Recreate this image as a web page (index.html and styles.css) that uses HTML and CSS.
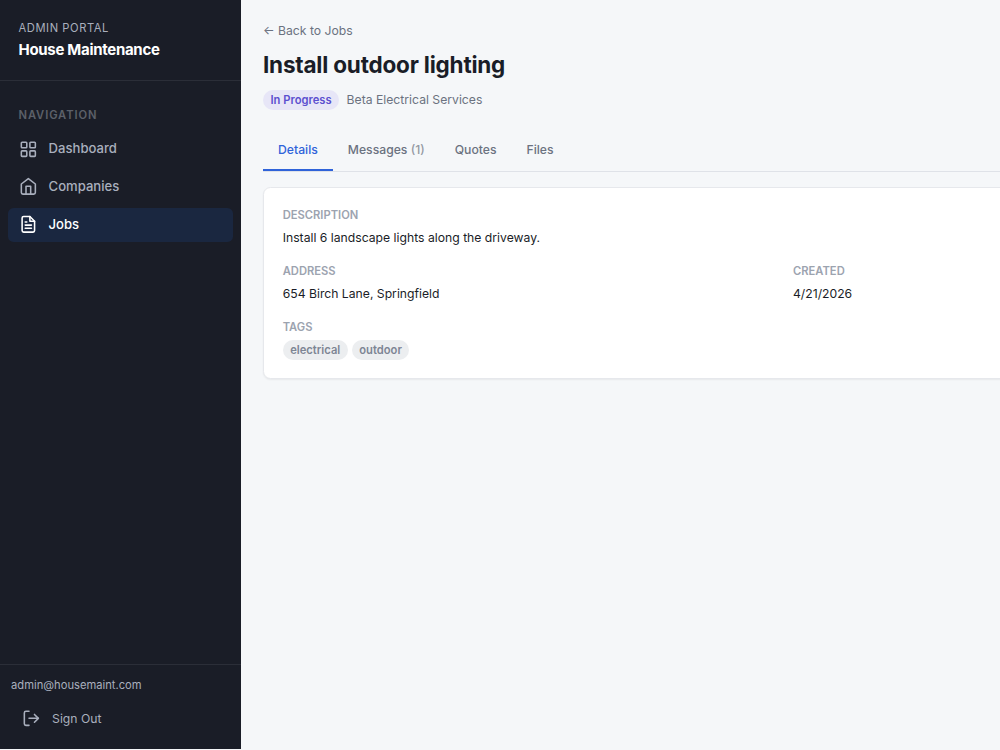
FILE: index.html
```html
<!DOCTYPE html>
<html lang="en">
<head>
    <meta charset="UTF-8">
    <meta name="viewport" content="width=device-width, initial-scale=1.0">
    <title>House Maintenance</title>
    <link rel="stylesheet" href="styles.css">
</head>
<body>
    <div class="layout">
        <aside class="sidebar">
            <div class="brand">
                <div class="brand-label">Admin Portal</div>
                <div class="brand-name">House Maintenance</div>
            </div>
            <nav class="nav">
                <div class="nav-title">Navigation</div>
                <a class="nav-item">
                    <svg class="icon" viewBox="0 0 24 24"><rect x="3" y="3" width="7" height="7" rx="1"/><rect x="14" y="3" width="7" height="7" rx="1"/><rect x="3" y="14" width="7" height="7" rx="1"/><rect x="14" y="14" width="7" height="7" rx="1"/></svg>
                    Dashboard
                </a>
                <a class="nav-item">
                    <svg class="icon" viewBox="0 0 24 24"><path d="M3 9l9-7 9 7v11a2 2 0 0 1-2 2H5a2 2 0 0 1-2-2z"/><path d="M9 22V12h6v10"/></svg>
                    Companies
                </a>
                <a class="nav-item active">
                    <svg class="icon" viewBox="0 0 24 24"><path d="M14 2H6a2 2 0 0 0-2 2v16a2 2 0 0 0 2 2h12a2 2 0 0 0 2-2V8z"/><path d="M14 2v6h6"/><path d="M16 13H8"/><path d="M16 17H8"/><path d="M10 9H8"/></svg>
                    Jobs
                </a>
            </nav>
            <div class="sidebar-footer">
                <div class="user-email">admin@housemaint.com</div>
                <button class="sign-out">
                    <svg class="icon" viewBox="0 0 24 24"><path d="M9 21H5a2 2 0 0 1-2-2V5a2 2 0 0 1 2-2h4"/><path d="M16 17l5-5-5-5"/><path d="M21 12H9"/></svg>
                    Sign Out
                </button>
            </div>
        </aside>

        <main class="main">
            <a class="back-link">← Back to Jobs</a>
            <h1>Install outdoor lighting</h1>
            <div class="job-meta">
                <span class="badge badge-progress">In Progress</span>
                <span class="company">Beta Electrical Services</span>
            </div>

            <div class="tabs">
                <button class="tab active">Details</button>
                <button class="tab">Messages <span class="count">(1)</span></button>
                <button class="tab">Quotes</button>
                <button class="tab">Files</button>
            </div>

            <div class="card">
                <div class="field full">
                    <div class="field-label">Description</div>
                    <div class="field-value">Install 6 landscape lights along the driveway.</div>
                </div>
                <div class="field">
                    <div class="field-label">Address</div>
                    <div class="field-value">654 Birch Lane, Springfield</div>
                </div>
                <div class="field">
                    <div class="field-label">Created</div>
                    <div class="field-value">4/21/2026</div>
                </div>
                <div class="field full">
                    <div class="field-label">Tags</div>
                    <div class="tags">
                        <span class="badge">electrical</span>
                        <span class="badge">outdoor</span>
                    </div>
                </div>
            </div>
        </main>
    </div>
</body>
</html>
```
FILE: styles.css
```css
* {
    box-sizing: border-box;
}
body {
    margin: 0;
    font-family: 'Inter', sans-serif;
    font-size: 13.1px;
    line-height: 1.5;
    color: #1a1d27;
    background: #f5f7f9;
    overflow: hidden;
}
button {
    font-family: inherit;
    font-size: inherit;
    background: none;
    border: none;
    cursor: pointer;
}
.layout {
    display: flex;
    height: 749px;
}
.sidebar {
    display: flex;
    flex-direction: column;
    flex-shrink: 0;
    width: 240.5px;
    background: #1a1d27;
    color: #a9afbd;
}
.brand {
    height: 81px;
    padding: 19px 18.5px 0;
    border-bottom: 1px solid #2b2e38;
}
.brand-label {
    font-size: 11.2px;
    line-height: 18px;
    letter-spacing: 0.56px;
    text-transform: uppercase;
}
.brand-name {
    margin-top: 2px;
    font-size: 15px;
    font-weight: 700;
    line-height: 22px;
    letter-spacing: -0.3px;
    color: #fff;
}
.nav {
    flex: 1;
    padding: 26px 7.5px 0;
}
.nav-title {
    padding: 0 11px;
    margin-bottom: 8px;
    font-size: 11.2px;
    font-weight: 600;
    line-height: 17px;
    letter-spacing: 0.9px;
    text-transform: uppercase;
    color: #5c6069;
}
.nav-item {
    display: flex;
    align-items: center;
    gap: 11.2px;
    height: 34px;
    margin-bottom: 3.8px;
    padding: 0 11.2px;
    border-radius: 5.6px;
    font-weight: 500;
}
.nav-item.active {
    background: #1a2740;
    color: #fff;
}
.icon {
    width: 18.7px;
    height: 18.7px;
    fill: none;
    stroke: currentColor;
    stroke-width: 2;
    stroke-linecap: round;
    stroke-linejoin: round;
}
.sidebar-footer {
    height: 85px;
    padding: 11px;
    border-top: 1px solid #2b2e38;
}
.user-email {
    font-size: 11.2px;
    line-height: 18px;
}
.sign-out {
    display: flex;
    align-items: center;
    gap: 11.2px;
    height: 34px;
    margin-top: 7px;
    padding: 0 11.2px;
    font-size: 12.2px;
    color: inherit;
}
.main {
    flex: 0 0 1090px;
    padding: 21px 22.5px;
}
.back-link {
    display: block;
    font-size: 12.2px;
    line-height: 19px;
    color: #6b7280;
}
h1 {
    margin: 8px 0 0;
    font-size: 22.5px;
    font-weight: 700;
    line-height: 34px;
    letter-spacing: -0.2px;
}
.job-meta {
    display: flex;
    align-items: center;
    gap: 7.5px;
    height: 20px;
    margin-top: 8px;
}
.company {
    font-size: 12.2px;
    color: #6b7280;
}
.badge {
    padding: 0 7.5px;
    border-radius: 10px;
    font-size: 11.2px;
    font-weight: 600;
    line-height: 20px;
    background: #eceef0;
    color: #7d8594;
}
.badge-progress {
    background: #e7e6f7;
    color: #5b4fcf;
}
.tabs {
    display: flex;
    height: 42px;
    margin: 20px 0 15px;
    border-bottom: 1px solid #dfe2e8;
}
.tab {
    height: 41px;
    padding: 0 15px;
    border-bottom: 2px solid transparent;
    font-size: 12.2px;
    font-weight: 500;
    color: #6b7280;
}
.tab.active {
    color: #2f63d9;
    border-bottom-color: #2f63d9;
}
.count {
    opacity: 0.7;
}
.card {
    display: grid;
    grid-template-columns: 1fr 1fr;
    gap: 15px;
    height: 192px;
    padding: 18.7px;
    background: #fff;
    border: 1px solid #e6e8ec;
    border-radius: 7.5px;
    box-shadow: 0 1px 2px rgba(0, 0, 0, 0.06);
}
.full {
    grid-column: 1 / -1;
}
.field-label {
    margin-bottom: 4px;
    font-size: 11.2px;
    font-weight: 600;
    line-height: 17px;
    text-transform: uppercase;
    color: #9ca3af;
}
.field-value {
    font-size: 12.2px;
    line-height: 20px;
}
.tags {
    display: flex;
    gap: 4px;
}
```
